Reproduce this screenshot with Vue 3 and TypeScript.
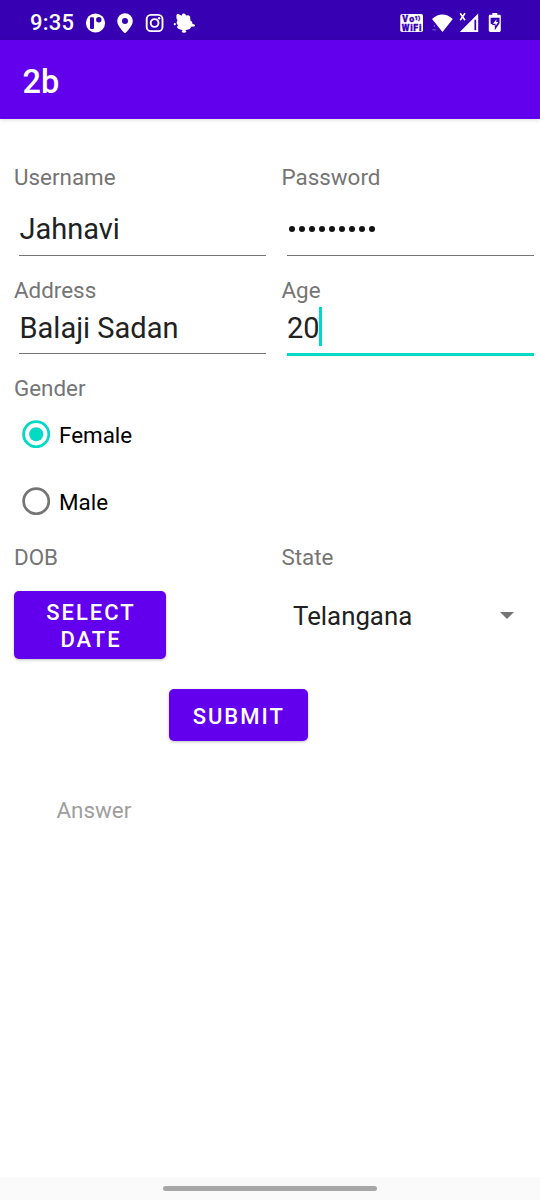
<script setup lang="ts">
import { ref } from 'vue'

const gender = ref<'Female' | 'Male'>('Female')
const genders = ['Female', 'Male'] as const
const username = 'Jahnavi'
const passwordLength = 9
const address = 'Balaji Sadan'
const age = '20'
const state = 'Telangana'
</script>

<template>
  <div class="screen">
    <header class="status">
      <span class="clock">9:35</span>
      <svg class="left-icons" width="112" height="24" viewBox="0 0 112 24">
        <circle cx="10.500" cy="12" r="9.600" fill="#fff" />
        <rect x="5" y="6.200" width="4" height="11.800" rx="1.200" fill="#3700b3" />
        <circle cx="13.800" cy="8.800" r="2.700" fill="#3700b3" />
        <path fill="#fff" fill-rule="evenodd" d="M40 2.200a7.800 7.800 0 0 0-7.800 7.800c0 5.600 7.800 12.300 7.800 12.300s7.800-6.700 7.800-12.300a7.800 7.800 0 0 0-7.800-7.800zm0 4.700a3 3 0 1 1 0 6 3 3 0 0 1 0-6z" />
        <g fill="none" stroke="#fff" stroke-width="1.900">
          <rect x="61.700" y="3.900" width="15.800" height="16.200" rx="4.200" />
          <circle cx="69.600" cy="12" r="3.900" />
        </g>
        <circle cx="74.100" cy="7.300" r="1.200" fill="#fff" />
        <path fill="#fff" d="M91.500 4q1-2 2.800-.6l2.200 1.400q.6-2.600 2.500-2.200 1.800.4 2 2 3.600-1.200 4.200 1.400l.2 3.400q2.200 1 2 3.400l2.400 1q.8 1.300-.6 1.700l-3 .3q-.8 2.600-3.200 2.800-4 1.400-7 .2-3.400-.6-4-2.200-.2-1.600 1.200-2.400-2-1.200-1.500-3 .2-1 .8-1.800-1.700-2.600-1-5.400z" />
        <circle cx="89.800" cy="13.200" r="1.100" fill="#fff" />
        <ellipse cx="99" cy="20.400" rx="2.200" ry="1.300" fill="#fff" />
      </svg>
      <svg class="right-icons" width="104" height="24" viewBox="0 0 104 24">
        <rect x="0.300" y="3" width="22.700" height="18" rx="1.800" fill="#fff" />
        <g class="badge-text" fill="#3700b3" stroke="#3700b3" stroke-width="0.300">
          <text x="2.200" y="10.900" font-size="8.800" textLength="12">Vo</text>
          <text x="14.600" y="8.800" font-size="6" textLength="5.500">1)</text>
          <text x="1.800" y="19.800" font-size="8.800" textLength="19.500">WiFi</text>
        </g>
        <path fill="#fff" d="M32 7.900q10.400-8.600 20.800 0L42.500 21z" />
        <path d="M34.300 14v2M32.300 18.800h4" stroke="#8060cc" stroke-width="1" />
        <path fill="#fff" d="M78.200 2.500V21H59.800z" />
        <path d="M75.300 8.700v10.500" stroke="#3700b3" stroke-width="1.700" />
        <path d="M60.200 2.300l4.800 7M65 2.300l-4.800 7" stroke="#fff" stroke-width="1.600" />
        <path fill="#fff" d="M92.300 2h5v1.800h2.200q1.300 0 1.300 1.300v14.500q0 1.400-1.400 1.400h-9.200q-1.400 0-1.400-1.400V5.100q0-1.300 1.300-1.300h2.200z" />
        <path fill="#3700b3" fill-rule="evenodd" d="M90.600 6.800h8.900v5.400l-4.700 7v-5.200h-1.800l-2.400-1.600zM96.600 8.300l-3.700 4.400h2.700v2.300l2.600-4.100h-2z" />
      </svg>
    </header>

    <div class="appbar"><h1>2b</h1></div>

    <main>
      <section class="row credentials">
        <div class="field">
          <label>Username</label>
          <div class="input"><span>{{ username }}</span></div>
        </div>
        <div class="field">
          <label>Password</label>
          <div class="input dots"><i v-for="n in passwordLength" :key="n"></i></div>
        </div>
      </section>

      <section class="row details">
        <div class="field">
          <label>Address</label>
          <div class="input"><span>{{ address }}</span></div>
        </div>
        <div class="field">
          <label>Age</label>
          <div class="input focused"><span>{{ age }}</span><b class="caret"></b></div>
        </div>
      </section>

      <section class="gender">
        <label>Gender</label>
        <div v-for="g in genders" :key="g" class="option" @click="gender = g">
          <svg class="radio" :class="{ on: gender === g }" width="28" height="28" viewBox="0 0 28 28">
            <circle class="ring" cx="14.200" cy="14.200" r="12.600" />
            <circle v-if="gender === g" class="dot" cx="14.200" cy="14.200" r="7" />
          </svg>
          <span>{{ g }}</span>
        </div>
      </section>

      <section class="row pickers">
        <div class="field">
          <label>DOB</label>
          <button class="date">SELECT<br />DATE</button>
        </div>
        <div class="field">
          <label>State</label>
          <div class="spinner"><span>{{ state }}</span><i class="arrow"></i></div>
        </div>
      </section>

      <button class="submit">SUBMIT</button>
      <p class="answer">Answer</p>
    </main>

    <footer><i class="handle"></i></footer>
  </div>
</template>

<style>
body { margin: 0; background: #fff; }
</style>

<style scoped>
* { box-sizing: border-box; }
.screen {
  width: 540px;
  height: 1200px;
  display: flex;
  flex-direction: column;
  overflow: hidden;
  background: #fff;
  font-family: Roboto, "Liberation Sans", sans-serif;
}
.status {
  flex: none;
  height: 40px;
  display: flex;
  align-items: center;
  padding: 6px 36px 0 30px;
  background: #3700b3;
  color: #fff;
}
.clock { width: 55px; font-size: 22px; line-height: 26px; font-weight: 500; letter-spacing: 0.2px; }
.left-icons, .right-icons { flex: none; display: block; }
.right-icons { margin-left: auto; }
.badge-text { font-family: Roboto, sans-serif; font-weight: 900; }
.appbar {
  flex: none;
  height: 79px;
  display: flex;
  align-items: center;
  padding: 4px 22.5px 0;
  background: #6200ee;
  color: #fff;
  box-shadow: 0 1px 4px rgba(0, 0, 0, 0.14);
}
h1 { margin: 0; font-size: 32.5px; line-height: 38px; font-weight: 500; }
main { flex: 1; display: flex; flex-direction: column; }
.row { flex: none; display: grid; grid-template-columns: 267.5px 1fr; }
.credentials { height: 137px; padding-top: 45px; }
.details { height: 101px; padding-top: 21px; }
.field { display: flex; flex-direction: column; padding-left: 14px; }
label { flex: none; height: 26px; font-size: 22.4px; line-height: 26px; color: #757575; }
.input {
  margin: 0 0 0 5px;
  padding-left: 0.5px;
  width: 247px;
  height: 48px;
  display: flex;
  align-items: center;
  font-size: 29px;
  line-height: 34px;
  color: #212121;
  border-bottom: 1px solid #757575;
}
.credentials .input { margin-top: 18px; padding-bottom: 6px; }
.details .input { margin-top: 1px; height: 50px; padding-bottom: 2px; }
.details .input.focused { height: 52px; padding-bottom: 3px; border-bottom: 3px solid #03dac5; }
.focused span { padding-top: 1px; }
.credentials .dots { gap: 4px; padding-left: 2px; padding-bottom: 6px; }
.dots i { width: 6px; height: 6px; border-radius: 50%; background: #111; }
.caret { flex: none; width: 3px; height: 39px; margin: -1px 0 0 -0.5px; background: #03dac5; }
.gender { flex: none; height: 185px; padding: 18px 14px 0; display: flex; flex-direction: column; }
.option {
  height: 67.5px;
  display: flex;
  align-items: center;
  gap: 9px;
  padding-left: 8px;
  font-size: 22.4px;
  line-height: 26px;
  color: #000;
}
.radio { display: block; margin-bottom: 2px; }
.ring { fill: none; stroke: #757575; stroke-width: 2.8; }
.on .ring { stroke: #03dac5; }
.dot { fill: #03dac5; }
.pickers { height: 117px; padding-top: 2px; }
button {
  font: 500 22px/26.4px Roboto, "Liberation Sans", sans-serif;
  letter-spacing: 2px;
  padding: 0;
  border: 0;
  border-radius: 5px;
  background: #6200ee;
  color: #fff;
  box-shadow: 0 1px 3px rgba(0, 0, 0, 0.25);
}
.date { width: 152px; height: 68px; margin-top: 21px; padding: 3px 0 0 2px; }
.spinner {
  display: flex;
  align-items: center;
  justify-content: space-between;
  margin: 30px 26.5px 0 11.5px;
  font-size: 25.8px;
  line-height: 32px;
  color: #212121;
}
.arrow { margin-top: -1px; border: 7px solid transparent; border-top-color: #757575; border-bottom: 0; }
.submit { flex: none; width: 138.5px; height: 52px; margin: 30px 0 0 169px; padding: 4px 0 0 1px; }
.answer { margin: 56px 0 0 56.5px; font-size: 22.4px; line-height: 26px; color: #9e9e9e; }
footer { flex: none; height: 23px; display: flex; justify-content: center; background: #fafafa; }
.handle { width: 214px; height: 5px; margin-top: 9px; border-radius: 3px; background: #a7a7a7; }
</style>
